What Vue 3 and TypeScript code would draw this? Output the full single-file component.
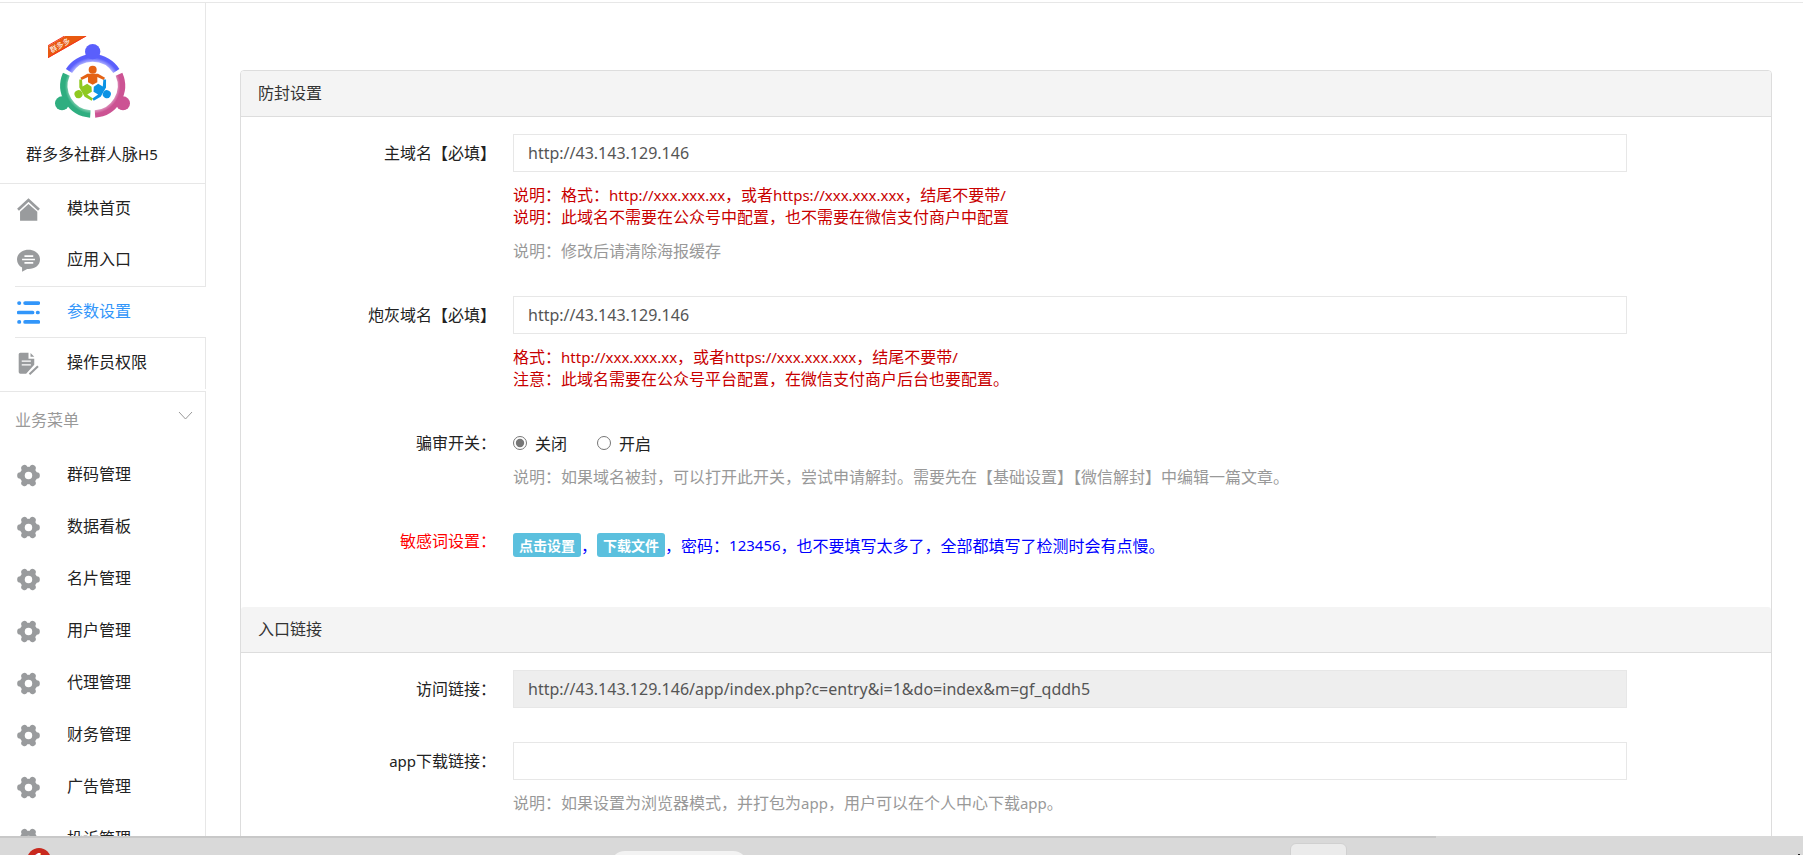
<script setup lang="ts">
import { ref } from 'vue'

interface MenuItem {
  label: string
  icon: 'home' | 'chat' | 'list' | 'doc'
  active?: boolean
}

const mainMenu: MenuItem[] = [
  { label: '模块首页', icon: 'home' },
  { label: '应用入口', icon: 'chat' },
  { label: '参数设置', icon: 'list', active: true },
  { label: '操作员权限', icon: 'doc' },
]

const businessMenu: string[] = [
  '群码管理',
  '数据看板',
  '名片管理',
  '用户管理',
  '代理管理',
  '财务管理',
  '广告管理',
  '投诉管理',
]

const mainDomain = ref('http://43.143.129.146')
const decoyDomain = ref('http://43.143.129.146')
const reviewSwitch = ref<'off' | 'on'>('off')
const entryLink = ref('http://43.143.129.146/app/index.php?c=entry&i=1&do=index&m=gf_qddh5')
const appLink = ref('')
</script>

<template>
  <div class="screen">
    <div class="workspace">
      <aside class="sidebar">
        <header class="brand">
          <svg class="logo" viewBox="144 108 249 249" aria-hidden="true">
            <defs>
              <radialGradient id="ringBlue" gradientUnits="userSpaceOnUse" cx="278" cy="258" r="96">
                <stop offset="0.74" stop-color="#b9bbff" />
                <stop offset="0.89" stop-color="#5a5ffc" />
              </radialGradient>
              <radialGradient id="ringGreen" gradientUnits="userSpaceOnUse" cx="278" cy="258" r="96">
                <stop offset="0.74" stop-color="#8fd4b8" />
                <stop offset="0.87" stop-color="#2fae80" />
              </radialGradient>
              <radialGradient id="ringPink" gradientUnits="userSpaceOnUse" cx="278" cy="258" r="96">
                <stop offset="0.74" stop-color="#e0a2c6" />
                <stop offset="0.87" stop-color="#cc5393" />
              </radialGradient>
              <g id="figure">
                <circle cx="278" cy="209" r="12" />
                <path d="M241 233 262 221H294L315 233 311 240 292 231V247L278 254 264 247V231L245 240Z" />
              </g>
            </defs>
            <path d="M144 139 196 108H260L144 174Z" fill="#e8590f" />
            <path d="M144 137 194 108M144 173 258 108" stroke="#f5301a" stroke-width="3" />
            <text x="155" y="159" transform="rotate(-29 155 159)" class="ribbon">群多多</text>
            <g fill="none" stroke-width="22">
              <path d="M207 213A84 84 0 0 1 349 213" stroke="url(#ringBlue)" />
              <path d="M199 223A85 85 0 0 0 271 342" stroke="url(#ringGreen)" />
              <path d="M357 223A85 85 0 0 1 285 342" stroke="url(#ringPink)" />
            </g>
            <circle cx="278" cy="155" r="23" fill="#5a5ffc" />
            <circle cx="186" cy="310" r="21" fill="#2fae80" />
            <circle cx="369" cy="310" r="21" fill="#cc5393" />
            <use href="#figure" fill="#e46214" />
            <use href="#figure" fill="#0d93e4" transform="rotate(120 278 258)" />
            <use href="#figure" fill="#8fc920" transform="rotate(240 278 258)" />
          </svg>
          <div class="brand-name">群多多社群人脉<span class="latin">H5</span></div>
        </header>

        <nav class="menu main-menu">
          <a v-for="item in mainMenu" :key="item.label" href="#" :class="{ active: item.active }">
            <svg viewBox="0 0 68 68" class="icon" aria-hidden="true">
              <template v-if="item.icon === 'home'">
                <path d="M3 35 34 6 65 35" fill="none" stroke="currentColor" stroke-width="8" />
                <path d="M9 41 34 18 60 41V67H9Z" fill="currentColor" />
              </template>
              <template v-else-if="item.icon === 'chat'">
                <path d="M34 2C15 2 0 14 0 31 0 42 6 50 15 55V67L30 59H34C53 59 68 48 68 31 68 14 53 2 34 2Z" fill="currentColor" />
                <path d="M22 21H48M15 31H53M22 41H48" stroke="#fff" stroke-width="5" />
              </template>
              <template v-else-if="item.icon === 'list'">
                <path
                  d="M6 6H7M24 6H63M5 34H46M61 34H62M6 62H7M24 62H63"
                  fill="none" stroke="currentColor" stroke-width="11" stroke-linecap="round"
                />
              </template>
              <template v-else>
                <path d="M10 2H34V20H51V38L27 64H10Q5 64 5 59V7Q5 2 10 2ZM40 3 51 14H40Z" fill="currentColor" />
                <path d="M14 27H41M14 38H41" stroke="#fff" stroke-width="4" />
                <path d="M37 66 62 42" stroke="currentColor" stroke-width="6" />
              </template>
            </svg>
            <span>{{ item.label }}</span>
          </a>
        </nav>

        <button type="button" class="section-title">
          <span>业务菜单</span>
          <svg viewBox="0 0 15 9" class="chevron" aria-hidden="true">
            <path d="M1 1 7.500 8 14 1" fill="none" stroke="#999" />
          </svg>
        </button>

        <nav class="menu">
          <a v-for="label in businessMenu" :key="label" href="#">
            <svg viewBox="0 0 68 68" class="icon" aria-hidden="true">
              <g stroke="currentColor" stroke-width="19" stroke-linecap="round">
                <path d="M10 34H58M22 12 46 56M46 12 22 56" />
              </g>
              <circle cx="34" cy="34" r="26" fill="currentColor" />
              <circle cx="34" cy="34" r="11" fill="#fff" />
            </svg>
            <span>{{ label }}</span>
          </a>
        </nav>
      </aside>

      <main class="content">
        <form class="panel" @submit.prevent>
          <h2>防封设置</h2>
          <div class="panel-body">
            <div class="row">
              <label class="caption" for="main-domain">主域名【必填】</label>
              <div class="field">
                <input id="main-domain" v-model="mainDomain" type="text" class="text-box" />
                <p class="help warn">
                  说明：格式：<span class="latin">http://xxx.xxx.xx</span>，或者<span class="latin">https://xxx.xxx.xxx</span>，结尾不要带<span class="latin">/</span><br />
                  说明：此域名不需要在公众号中配置，也不需要在微信支付商户中配置
                </p>
                <p class="help">说明：修改后请清除海报缓存</p>
              </div>
            </div>
            <div class="row">
              <label class="caption" for="decoy-domain">炮灰域名【必填】</label>
              <div class="field">
                <input id="decoy-domain" v-model="decoyDomain" type="text" class="text-box" />
                <p class="help warn">
                  格式：<span class="latin">http://xxx.xxx.xx</span>，或者<span class="latin">https://xxx.xxx.xxx</span>，结尾不要带<span class="latin">/</span><br />
                  注意：此域名需要在公众号平台配置，在微信支付商户后台也要配置。
                </p>
              </div>
            </div>
            <div class="row" role="radiogroup" aria-labelledby="review-caption">
              <span id="review-caption" class="caption">骗审开关：</span>
              <div class="field">
                <div class="radios">
                  <label><input v-model="reviewSwitch" type="radio" name="review" value="off" />关闭</label>
                  <label><input v-model="reviewSwitch" type="radio" name="review" value="on" />开启</label>
                </div>
                <p class="help close">说明：如果域名被封，可以打开此开关，尝试申请解封。需要先在【基础设置】【微信解封】中编辑一篇文章。</p>
              </div>
            </div>
            <div class="row">
              <span class="caption required">敏感词设置：</span>
              <div class="field words">
                <a href="#" class="tag">点击设置</a>，<a href="#" class="tag">下载文件</a>，密码：<span class="latin">123456</span>，也不要填写太多了，全部都填写了检测时会有点慢。
              </div>
            </div>
          </div>

          <h2>入口链接</h2>
          <div class="panel-body">
            <div class="row">
              <label class="caption" for="entry-link">访问链接：</label>
              <div class="field">
                <input id="entry-link" v-model="entryLink" type="text" class="text-box" readonly />
              </div>
            </div>
            <div class="row">
              <label class="caption" for="app-link"><span class="latin">app</span>下载链接：</label>
              <div class="field">
                <input id="app-link" v-model="appLink" type="text" class="text-box" />
                <p class="help">说明：如果设置为浏览器模式，并打包为<span class="latin">app</span>，用户可以在个人中心下载<span class="latin">app</span>。</p>
              </div>
            </div>
          </div>
        </form>
      </main>
    </div>

    <footer class="taskbar">
      <div class="progress"></div>
      <span class="badge">1</span>
      <span class="pill"></span>
      <span class="tile"></span>
      <span class="tray"></span>
    </footer>
  </div>
</template>

<style>
body {
  margin: 0;
  background: #fff;
}
</style>

<style scoped>
.screen {
  display: flex;
  flex-direction: column;
  height: 100vh;
  overflow: hidden;
  box-sizing: border-box;
  padding-top: 2px;
  font: 16px/22px "Noto Sans CJK SC", sans-serif;
  color: #222;
}
.latin {
  font-family: "Noto Sans", "Noto Sans CJK SC", sans-serif;
  font-size: 15px;
  line-height: 1;
}
.workspace {
  display: flex;
  flex: 1;
  min-height: 0;
  overflow: hidden;
  border-top: 1px solid #e7e7e7;
}
.sidebar {
  flex: none;
  width: 206px;
}
.brand {
  display: flex;
  flex-direction: column;
  height: 180px;
  border-bottom: 1px solid #e7e7e7;
  border-right: 1px solid #e7e7e7;
}
.logo {
  width: 83px;
  height: 83px;
  margin: 33px 0 0 48px;
}
.ribbon {
  font-size: 22px;
  fill: #fff;
}
.brand-name {
  margin: 23px 0 0 26px;
  white-space: nowrap;
}
.menu a {
  display: flex;
  align-items: center;
  box-sizing: border-box;
  height: 52px;
  margin-left: 15px;
  padding-left: 2px;
  gap: 27px;
  border-right: 1px solid #e7e7e7;
  color: #222;
  text-decoration: none;
}
.menu a span {
  padding-bottom: 5px;
}
.main-menu {
  padding-bottom: 2px;
  border-bottom: 1px solid #e7e7e7;
}
.main-menu a {
  height: 51px;
}
.main-menu a.active {
  height: 52px;
  border: solid #e7e7e7;
  border-width: 1px 0;
  color: #3296fa;
}
.icon {
  flex: none;
  width: 23px;
  height: 23px;
  color: #999b9d;
}
.active .icon {
  color: #3296fa;
}
.section-title {
  display: flex;
  align-items: center;
  justify-content: space-between;
  width: 100%;
  height: 57px;
  padding: 0 12px 3px 15px;
  border: 0;
  border-right: 1px solid #e7e7e7;
  background: none;
  font: inherit;
  color: #999;
}
.chevron {
  width: 15px;
  height: 9px;
  margin-bottom: 7px;
}
.content {
  flex: 1;
  min-width: 0;
  padding: 67px 31px 0 34px;
}
.panel {
  border: 1px solid #ddd;
  border-radius: 4px;
}
.panel h2 {
  margin: 0;
  padding: 10px 17px 13px;
  border-bottom: 1px solid #ddd;
  border-radius: 3px 3px 0 0;
  background: #f4f4f4;
  font-size: 16px;
  font-weight: 400;
  line-height: 22px;
  color: #333;
}
.panel-body {
  padding: 17px 0 16px;
}
.row {
  display: flex;
  margin-bottom: 34px;
}
.caption {
  flex: none;
  width: 16.67%;
  padding-top: 7px;
  text-align: right;
}
.caption.required {
  color: #f00;
}
.field {
  box-sizing: border-box;
  width: 75%;
  padding: 0 17px;
}
.text-box {
  display: block;
  box-sizing: border-box;
  width: 100%;
  height: 38px;
  padding: 0 14px;
  border: 1px solid #e7e7e7;
  border-radius: 0;
  background: #fff;
  font: 16px/22px "Noto Sans", sans-serif;
  color: #555;
  outline: none;
}
.text-box[readonly] {
  background: #eee;
}
.help {
  margin: 11px 0 0;
  padding-bottom: 1px;
  color: #999;
}
.help.close {
  margin-top: 3px;
}
.help.warn {
  color: #c80000;
}
.radios {
  display: flex;
  align-items: center;
  height: 38px;
  gap: 30px;
}
.radios label {
  display: flex;
  align-items: center;
  gap: 8px;
}
.radios input {
  width: 14px;
  height: 14px;
  margin: 0;
  accent-color: #767676;
}
.words {
  display: flex;
  align-items: center;
  padding-top: 11px;
  color: #00f;
}
.tag {
  padding: 0 6px;
  border-radius: 3px;
  background: #5bc0de;
  color: #fff;
  font-size: 14px;
  font-weight: 700;
  line-height: 24px;
  text-decoration: none;
}
.taskbar {
  display: grid;
  grid-template-columns: 27px 24px 559px 138px 542px 57px 1fr;
  grid-template-rows: 2px 17px;
  flex: none;
  height: 19px;
  overflow: hidden;
  background: #d9d9d9;
}
.progress {
  grid-area: 1 / 1 / 2 / 8;
  width: 1436px;
  max-width: 80%;
  background: #c8c8c8;
}
.badge {
  grid-area: 2 / 2;
  height: 24px;
  margin-top: 10px;
  border-radius: 12px;
  background: #c8291e;
  color: #fff;
  font: bold 17px/24px "Liberation Sans", sans-serif;
  text-align: center;
}
.pill {
  grid-area: 2 / 4;
  height: 30px;
  margin-top: 13px;
  border-radius: 15px;
  background: #f3f3f3;
}
.tile {
  grid-area: 2 / 6;
  height: 30px;
  margin-top: 5px;
  border: 1px solid #d0d0d0;
  border-radius: 6px;
  background: #ebebeb;
  box-sizing: border-box;
}
.tray {
  grid-area: 2 / 7;
  justify-self: end;
  align-self: end;
  width: 2px;
  height: 1px;
  margin-right: 3px;
  background: #222;
}
</style>
